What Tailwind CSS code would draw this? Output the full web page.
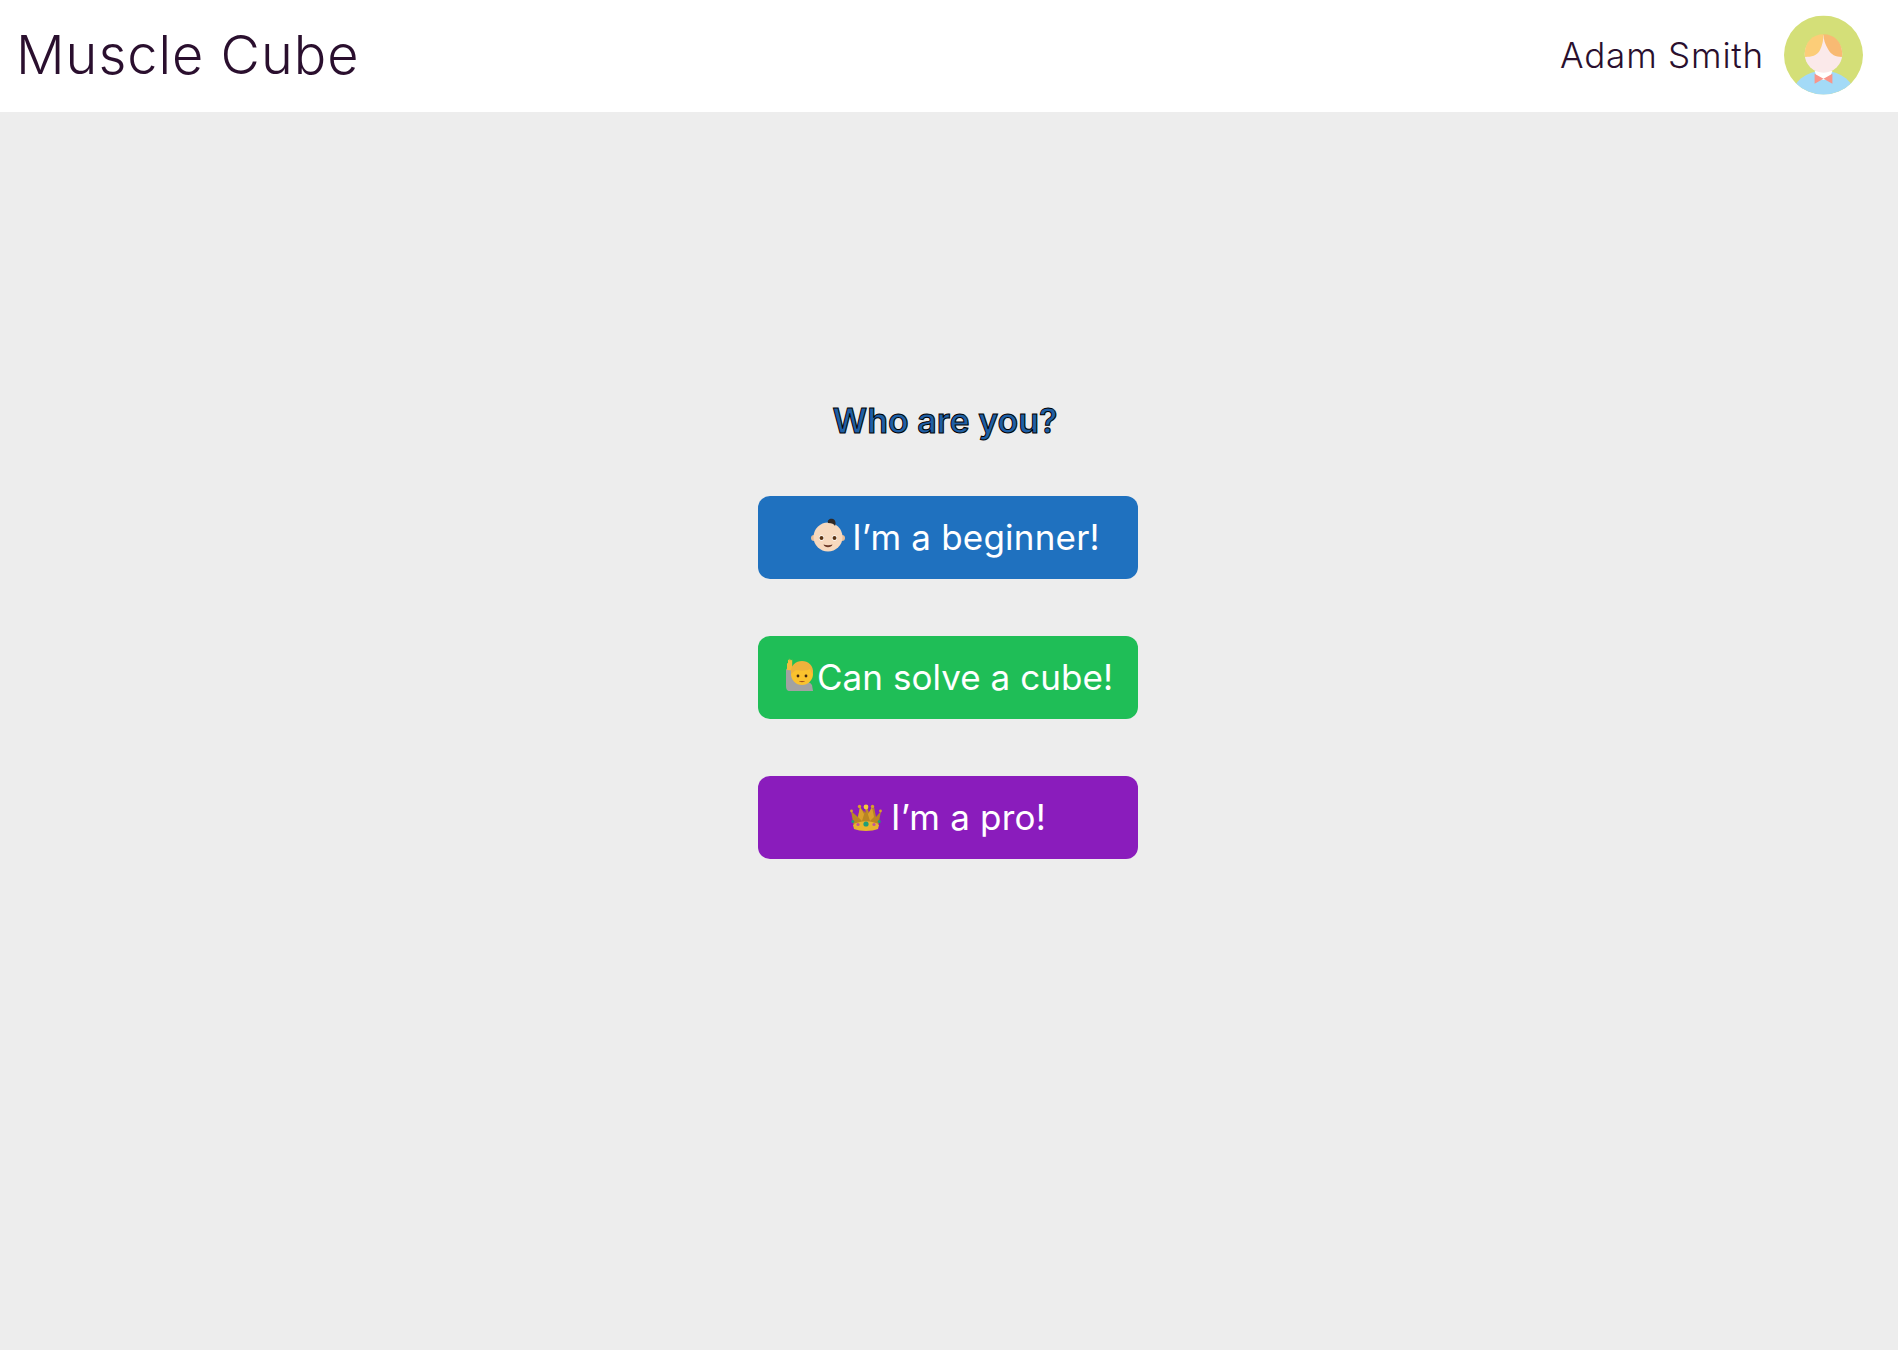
<!DOCTYPE html>
<html lang="en">
<head>
    <meta charset="UTF-8">
    <meta name="viewport" content="width=device-width, initial-scale=1.0">
    <title>Muscle Cube</title>
    <script src="https://cdn.jsdelivr.net/npm/@tailwindcss/browser@4"></script>
</head>
<body class="bg-[#ededed] h-screen font-['Inter',sans-serif] overflow-hidden">
    <header class="bg-white h-[112px] flex items-center justify-between pl-[16px] pr-[35px]">
        <h1 class="text-[54px] font-[350] text-[#2a0f2e] tracking-[1px] -mt-[3px]">Muscle Cube</h1>
        <div class="flex items-center gap-[20px] -mt-[2px]">
            <span class="text-[35px] font-[350] text-[#2a0f2e] tracking-[0.8px]">Adam Smith</span>
            <svg width="79" height="80" viewBox="0 0 80 80">
                <defs><clipPath id="avatar-clip"><circle cx="40" cy="40" r="40"/></clipPath></defs>
                <g clip-path="url(#avatar-clip)">
                    <rect width="80" height="80" fill="#d4df78"/>
                    <ellipse cx="40" cy="82" rx="32" ry="26" fill="#a3daf7"/>
                    <path d="M31 56h18l-3 9h-12z" fill="#fff"/>
                    <path d="M31 59l9 5 9-5v10l-9-5-9 5z" fill="#f9958a"/>
                    <circle cx="40" cy="39" r="19" fill="#fbe9ea"/>
                    <path d="M40 19c-11 0-19 8-19 20 0 1 0 2 .5 3 6 0 12-1 15-7 2-4 3.500-10 3.500-16z" fill="#fccd78"/>
                    <path d="M40 19c11 0 19 8 19 20 0 1 0 2-.5 3-6 0-11-2-14-8-3-5-4.500-10-4.500-15z" fill="#f8ba73"/>
                </g>
            </svg>
        </div>
    </header>

    <main class="flex flex-col items-center pt-[287px] pr-[2px]">
        <h2 class="text-[34px] leading-[44px] font-semibold text-[#1f5fa5] mr-[6px] [-webkit-text-stroke:1px_#000]">Who are you?</h2>
        <div class="flex flex-col gap-[57px] mt-[53px]">
            <button class="w-[380px] h-[83px] rounded-xl bg-[#1f71bf] text-white text-[35px] tracking-[0.2px] flex items-center justify-center gap-[7px] pl-[15px]">
                <svg width="34" height="34" viewBox="0 0 34 34" class="-mt-[6px]">
                    <circle cx="3" cy="20" r="3" fill="#e8bd98"/><circle cx="31" cy="20" r="3" fill="#e8bd98"/>
                    <circle cx="17" cy="19" r="14.500" fill="#f7d9be"/>
                    <path d="M17 5c-1-3 2-5 5-4 3 1 3 5 2 7-1-2-3-3-7-3z" fill="#2f2a28"/>
                    <ellipse cx="10.500" cy="20" rx="2.600" ry="2.800" fill="#fff"/><ellipse cx="23.500" cy="20" rx="2.600" ry="2.800" fill="#fff"/>
                    <circle cx="10.500" cy="20" r="2" fill="#5b3312"/><circle cx="23.500" cy="20" r="2" fill="#5b3312"/>
                    <path d="M12.500 26.500c2.500 1 6.500 1 9 0-1 3.500-8 3.500-9 0z" fill="#6d3b2a"/>
                </svg>
                <span>I’m a beginner!</span>
            </button>
            <button class="w-[380px] h-[83px] rounded-xl bg-[#1fbe57] text-white text-[35px] tracking-[0.05px] flex items-center justify-center gap-[3px] pl-[2px]">
                <svg width="29" height="34" viewBox="0 0 29 34" class="-mt-[6px]">
                    <path d="M1 28V12c0-2 4-3 5-1l5 8c4 5 12 8 17 14H5c-3 0-4-2-4-5z" fill="#a2a2a2"/>
                    <path d="M2 12V5l1 .5V1.500l1.500 1V.500L6 2.500l1.200-1V9l1-.5-.5 4z" fill="#f2bd3d"/>
                    <path d="M8 26c2-2 5-3 9-3s8 1 10 4l1 6H11z" fill="#a2a2a2"/>
                    <circle cx="17" cy="16" r="11" fill="#fac22e"/>
                    <path d="M6 16C5 7 11 3 17 3s12 4 11 13c-1 0-2-3-3-5-3 2-11 2-14 1-2 1-3 3-5 4z" fill="#efb23c"/>
                    <circle cx="13" cy="18" r="1.400" fill="#42260f"/><circle cx="21" cy="18" r="1.400" fill="#42260f"/>
                    <path d="M14 23h6c-1 1.500-5 1.500-6 0z" fill="#a5521e"/>
                </svg>
                <span>Can solve a cube!</span>
            </button>
            <button class="w-[380px] h-[83px] rounded-xl bg-[#8a1cbc] text-white text-[35px] tracking-[0.2px] flex items-center justify-center gap-[9px]">
                <svg width="32" height="27" viewBox="0 0 32 27">
                    <path d="M1 7l3 16h24l3-16-5 6-2-10-5 6-2-7-2 7-5-6-2 10z" fill="#b98523"/>
                    <path d="M10 3l-2 10 4 4 4-13 4 13 4-4-2-10-4 7-2-8-2 8z" fill="#d9a02c"/>
                    <path d="M3 21c6-5 20-5 26 0l-1 4c-6 2.500-18 2.500-24 0z" fill="#e7b52f"/>
                    <circle cx="16" cy="3" r="2.400" fill="#f6ca3c"/><circle cx="9.500" cy="2.500" r="1.700" fill="#d9a02c"/><circle cx="22.500" cy="2.500" r="1.700" fill="#d9a02c"/><circle cx="1.500" cy="7" r="1.400" fill="#d9a02c"/><circle cx="30.500" cy="7" r="1.400" fill="#d9a02c"/>
                    <circle cx="16" cy="20" r="2.600" fill="#1e9e78"/><circle cx="8" cy="20.500" r="1.600" fill="#c1569c"/><circle cx="24" cy="20.500" r="1.600" fill="#c1569c"/><circle cx="2.800" cy="17.500" r="1.500" fill="#1e9e78"/><circle cx="29.200" cy="17.500" r="1.500" fill="#1e9e78"/>
                </svg>
                <span>I’m a pro!</span>
            </button>
        </div>
    </main>
</body>
</html>
